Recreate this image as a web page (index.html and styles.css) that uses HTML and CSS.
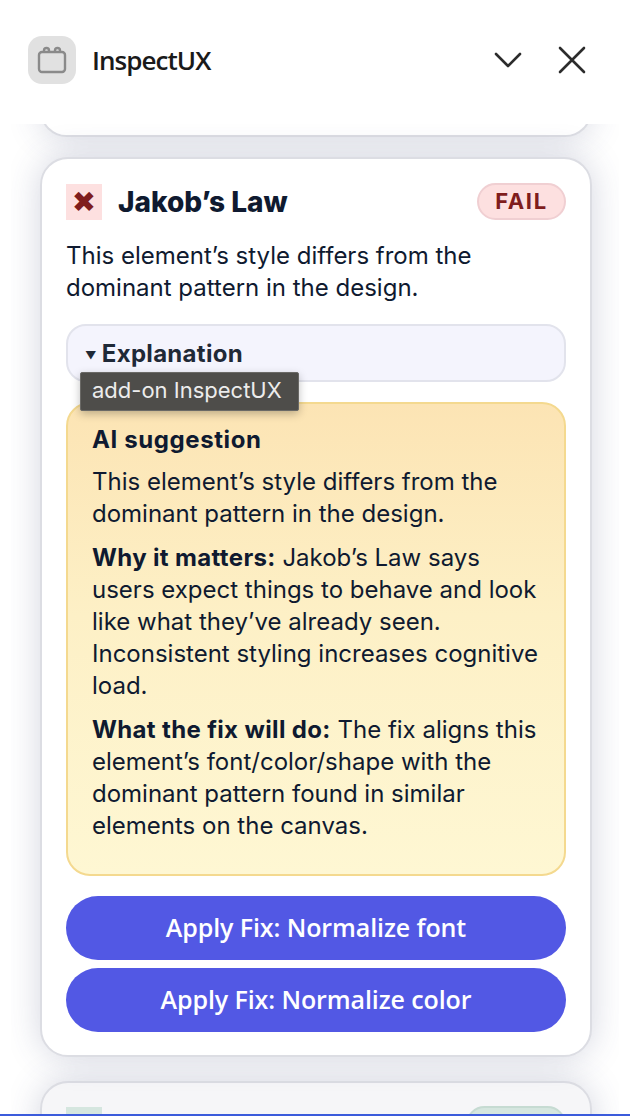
FILE: index.html
```html
<!DOCTYPE html>
<html lang="en">
<head>
    <meta charset="UTF-8">
    <meta name="viewport" content="width=device-width, initial-scale=1.0">
    <title>InspectUX</title>
    <link rel="stylesheet" href="styles.css">
</head>
<body>
    <div class="panel">
        <header class="panel-header">
            <div class="app-icon">
                <svg width="30" height="28" viewBox="0 0 30 28" fill="none" stroke="#8a8a8a" stroke-width="2.4">
                    <rect x="2" y="6" width="26" height="20" rx="3"></rect>
                    <path d="M7 6V4.5a2.5 2.5 0 0 1 5 0V6M18 6V4.5a2.5 2.5 0 0 1 5 0V6"></path>
                </svg>
            </div>
            <span class="app-name">InspectUX</span>
            <button class="icon-button chevron" aria-label="Collapse">
                <svg width="28" height="18" viewBox="0 0 28 18" fill="none" stroke="#2c2c2c" stroke-width="2.6" stroke-linecap="round" stroke-linejoin="round">
                    <path d="M2 3l12 12L26 3"></path>
                </svg>
            </button>
            <button class="icon-button" aria-label="Close">
                <svg width="28" height="28" viewBox="0 0 28 28" fill="none" stroke="#2c2c2c" stroke-width="2.6" stroke-linecap="round">
                    <path d="M2 2l24 24M26 2L2 26"></path>
                </svg>
            </button>
        </header>

        <div class="results">
            <div class="card card-previous"></div>

            <section class="card card-main">
                <div class="card-head">
                    <span class="status-icon">✖</span>
                    <h2>Jakob’s Law</h2>
                    <span class="badge">FAIL</span>
                </div>
                <p class="summary">This element’s style differs from the dominant pattern in the design.</p>

                <div class="explain-wrap">
                    <div class="explain"><span class="caret">▼</span> Explanation</div>
                    <div class="tooltip">add-on InspectUX</div>
                </div>

                <div class="suggestion">
                    <h3>AI suggestion</h3>
                    <p>This element’s style differs from the dominant pattern in the design.</p>
                    <p><strong>Why it matters:</strong> Jakob’s Law says users expect things to behave and look like what they’ve already seen. Inconsistent styling increases cognitive load.</p>
                    <p><strong>What the fix will do:</strong> The fix aligns this element’s font/color/shape with the dominant pattern found in similar elements on the canvas.</p>
                </div>

                <button class="fix-button">Apply Fix: Normalize font</button>
                <button class="fix-button">Apply Fix: Normalize color</button>
            </section>

            <section class="card card-next">
                <div class="card-head">
                    <span class="status-icon status-pass"></span>
                    <span class="badge badge-pass"></span>
                </div>
            </section>
        </div>
        <div class="bottom-line"></div>
    </div>
</body>
</html>
```

FILE: styles.css
```css
* {
    box-sizing: border-box;
}

html, body {
    margin: 0;
    height: 100%;
    background-color: #fff;
}

body {
    font-family: Inter, "Liberation Sans", sans-serif;
    color: #111827;
}

.panel {
    height: 1116px;
    display: flex;
    flex-direction: column;
    overflow: hidden;
}

.panel-header {
    height: 124px;
    flex: none;
    display: flex;
    align-items: center;
    padding: 0 44px 4px 28px;
    background-color: #fff;
}

.app-icon {
    width: 48px;
    height: 48px;
    border-radius: 14px;
    background-color: #e1e1e1;
    display: flex;
    align-items: center;
    justify-content: center;
}

.app-name {
    margin-left: 16px;
    font-family: "Open Sans", sans-serif;
    font-size: 26px;
    font-weight: 600;
    letter-spacing: -0.95px;
    color: #1a1a1a;
    flex: 1;
}

.icon-button {
    background: none;
    border: none;
    padding: 0;
    display: flex;
}

.chevron {
    margin-right: 36px;
}

.results {
    flex: 1;
    min-height: 0;
    margin: 0 11px;
    padding: 0 27px 0 29px;
    overflow: hidden;
    display: flex;
    flex-direction: column;
    gap: 21px;
    background-color: #fff;
}

.card {
    flex: none;
    padding: 24px 24px 23px;
    background-color: #fff;
    border: 2px solid #dcdde3;
    border-radius: 28px;
    box-shadow: 0 0 34px rgba(60, 70, 115, 0.22);
    position: relative;
}

.card-previous {
    height: 53px;
    margin-top: -40px;
    margin-bottom: -1px;
    border-top: none;
    z-index: 1;
}

.card-main {
    z-index: 1;
    margin-bottom: 3px;
}

.card-head {
    display: flex;
    align-items: center;
    height: 38px;
}

.status-icon {
    width: 36px;
    height: 36px;
    background-color: #fde0e0;
    color: #7f1d1d;
    font-family: "DejaVu Sans", sans-serif;
    font-size: 29px;
    line-height: 36px;
    text-align: center;
}

h2 {
    margin: 0 0 0 16px;
    flex: 1;
    font-size: 28px;
    font-weight: 800;
    color: #0f1a30;
}

.badge {
    width: 89px;
    height: 37px;
    margin-top: -1px;
    border-radius: 19px;
    border: 2px solid #f0cfd2;
    background-color: #fde0e0;
    color: #7f1d1d;
    font-size: 22px;
    font-weight: 700;
    letter-spacing: 1.6px;
    line-height: 33px;
    text-align: center;
}

.summary {
    margin: 19px 0 20px;
    font-size: 24px;
    line-height: 32px;
    color: #0f1a30;
}

.explain-wrap {
    position: relative;
    margin-bottom: 20px;
}

.explain {
    height: 58px;
    padding: 0 17px;
    border: 2px solid #e2e3ec;
    border-radius: 20px;
    background-color: #f4f4fd;
    color: #1f2937;
    font-size: 24px;
    font-weight: 700;
    letter-spacing: 0.3px;
    line-height: 56px;
}

.caret {
    font-size: 11px;
    vertical-align: 3px;
    margin-right: -1px;
}

.tooltip {
    position: absolute;
    left: 14px;
    top: 48px;
    width: 219px;
    height: 39px;
    padding-left: 11px;
    border: 1px solid #6a6966;
    border-radius: 2px;
    background-color: #4e4d4a;
    box-shadow: 0 3px 8px rgba(0, 0, 0, 0.25);
    color: #ececec;
    font-size: 22px;
    line-height: 35px;
}

.suggestion {
    height: 474px;
    padding: 20px 24px;
    margin-bottom: 20px;
    border: 2px solid #f4d98f;
    border-radius: 24px;
    background: linear-gradient(180deg, #fce4b4 0, #fdf0c6 45%, #fef7d3 100%);
    font-size: 24px;
    line-height: 32px;
    color: #0f1a30;
}

.suggestion h3 {
    margin: 0 0 10px;
    font-size: 24px;
    line-height: 32px;
    font-weight: 700;
    letter-spacing: 0.6px;
}

.suggestion p {
    margin: 0 0 12px;
}

.suggestion strong {
    letter-spacing: 0.35px;
}

.fix-button {
    display: block;
    width: 100%;
    height: 64px;
    margin-top: 8px;
    padding-bottom: 4px;
    border: none;
    border-radius: 32px;
    background-color: #5258e4;
    color: #fff;
    font-family: "Open Sans", sans-serif;
    font-size: 25px;
    font-weight: 600;
    letter-spacing: -0.1px;
}

.suggestion + .fix-button {
    margin-top: 0;
}

.card-next {
    background-color: #f6f6f8;
    padding-top: 23px;
    height: 200px;
}

.status-pass {
    background-color: #d5e6df;
}

.badge-pass {
    width: 100px;
    background-color: #d5e6df;
    border-color: #c6dbd2;
    margin-left: auto;
}

.bottom-line {
    height: 2px;
    flex: none;
    background-color: #3b5bdb;
}
```
